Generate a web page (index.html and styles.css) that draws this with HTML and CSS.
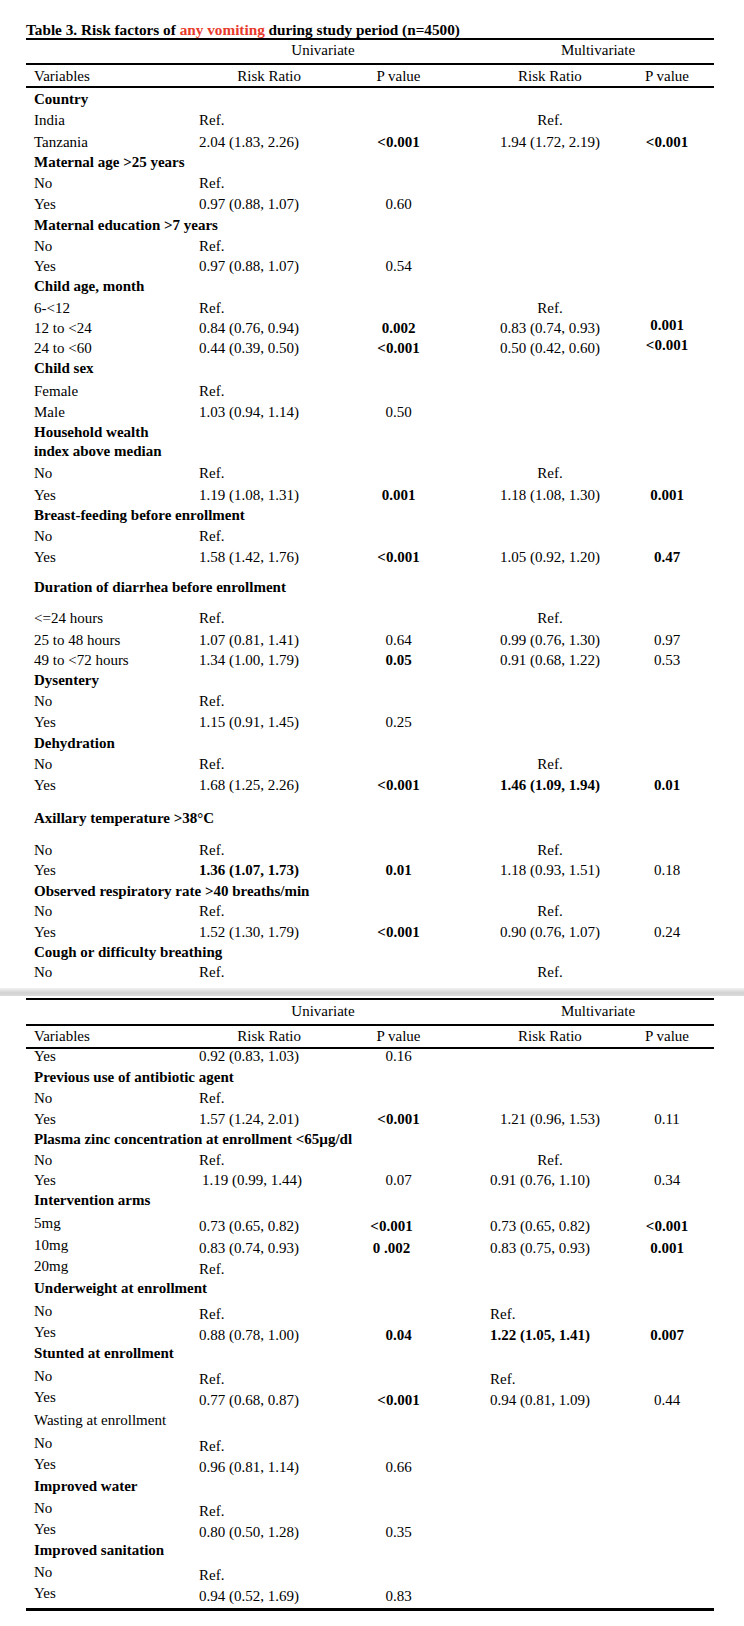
FILE: index.html
```html
<!DOCTYPE html>
<html lang="en">
<head>
<meta charset="utf-8">
<title>Table 3</title>
<link rel="stylesheet" href="styles.css">
</head>
<body>
<div class="page">
  <section class="part">
    <div class="title">Table 3. Risk factors of <span class="hl">any vomiting</span> during study period (n=4500)</div>
    <div class="table">
      <div class="row hd1"><div class="uh">Univariate</div><div class="mh">Multivariate</div></div>
      <div class="row hd2"><div class="lab">Variables</div><div class="rrh">Risk Ratio</div><div class="p">P value</div><div class="mrr">Risk Ratio</div><div class="mp">P value</div></div>

      <div class="row h22 first"><div class="sec">Country</div></div>
      <div class="row h22"><div class="lab">India</div><div class="rr">Ref.</div><div class="mrr">Ref.</div></div>
      <div class="row h20"><div class="lab">Tanzania</div><div class="rr">2.04 (1.83, 2.26)</div><div class="p b">&lt;0.001</div><div class="mrr">1.94 (1.72, 2.19)</div><div class="mp b">&lt;0.001</div></div>
      <div class="row h21"><div class="sec">Maternal age &gt;25 years</div></div>
      <div class="row h21"><div class="lab">No</div><div class="rr">Ref.</div></div>
      <div class="row h21"><div class="lab">Yes</div><div class="rr">0.97 (0.88, 1.07)</div><div class="p">0.60</div></div>
      <div class="row h21"><div class="sec">Maternal education &gt;7 years</div></div>
      <div class="row h20"><div class="lab">No</div><div class="rr">Ref.</div></div>
      <div class="row h20"><div class="lab">Yes</div><div class="rr">0.97 (0.88, 1.07)</div><div class="p">0.54</div></div>
      <div class="row h22"><div class="sec">Child age, month</div></div>
      <div class="row h20"><div class="lab">6-&lt;12</div><div class="rr">Ref.</div><div class="mrr">Ref.</div></div>
      <div class="row h20"><div class="lab">12 to &lt;24</div><div class="rr">0.84 (0.76, 0.94)</div><div class="p b">0.002</div><div class="mrr">0.83 (0.74, 0.93)</div><div class="mp b up">0.001</div></div>
      <div class="row h20"><div class="lab">24 to &lt;60</div><div class="rr">0.44 (0.39, 0.50)</div><div class="p b">&lt;0.001</div><div class="mrr">0.50 (0.42, 0.60)</div><div class="mp b up">&lt;0.001</div></div>
      <div class="row h23"><div class="sec">Child sex</div></div>
      <div class="row h21"><div class="lab">Female</div><div class="rr">Ref.</div></div>
      <div class="row h21"><div class="lab">Male</div><div class="rr">1.03 (0.94, 1.14)</div><div class="p">0.50</div></div>
      <div class="row h40"><div class="sec two">Household wealth<br>index above median</div></div>
      <div class="row h22"><div class="lab">No</div><div class="rr">Ref.</div><div class="mrr">Ref.</div></div>
      <div class="row h20"><div class="lab">Yes</div><div class="rr">1.19 (1.08, 1.31)</div><div class="p b">0.001</div><div class="mrr">1.18 (1.08, 1.30)</div><div class="mp b">0.001</div></div>
      <div class="row h21"><div class="sec">Breast-feeding before enrollment</div></div>
      <div class="row h21"><div class="lab">No</div><div class="rr">Ref.</div></div>
      <div class="row h30"><div class="lab">Yes</div><div class="rr">1.58 (1.42, 1.76)</div><div class="p b">&lt;0.001</div><div class="mrr">1.05 (0.92, 1.20)</div><div class="mp b">0.47</div></div>
      <div class="row h31"><div class="sec">Duration of diarrhea before enrollment</div></div>
      <div class="row h22"><div class="lab">&lt;=24 hours</div><div class="rr">Ref.</div><div class="mrr">Ref.</div></div>
      <div class="row h20"><div class="lab">25 to 48 hours</div><div class="rr">1.07 (0.81, 1.41)</div><div class="p">0.64</div><div class="mrr">0.99 (0.76, 1.30)</div><div class="mp">0.97</div></div>
      <div class="row h20"><div class="lab">49 to &lt;72 hours</div><div class="rr">1.34 (1.00, 1.79)</div><div class="p b">0.05</div><div class="mrr">0.91 (0.68, 1.22)</div><div class="mp">0.53</div></div>
      <div class="row h21"><div class="sec">Dysentery</div></div>
      <div class="row h21"><div class="lab">No</div><div class="rr">Ref.</div></div>
      <div class="row h21"><div class="lab">Yes</div><div class="rr">1.15 (0.91, 1.45)</div><div class="p">0.25</div></div>
      <div class="row h21"><div class="sec">Dehydration</div></div>
      <div class="row h21"><div class="lab">No</div><div class="rr">Ref.</div><div class="mrr">Ref.</div></div>
      <div class="row h33"><div class="lab">Yes</div><div class="rr">1.68 (1.25, 2.26)</div><div class="p b">&lt;0.001</div><div class="mrr b">1.46 (1.09, 1.94)</div><div class="mp b">0.01</div></div>
      <div class="row h32"><div class="sec">Axillary temperature &gt;38°C</div></div>
      <div class="row h20"><div class="lab">No</div><div class="rr">Ref.</div><div class="mrr">Ref.</div></div>
      <div class="row h21"><div class="lab">Yes</div><div class="rr b">1.36 (1.07, 1.73)</div><div class="p b">0.01</div><div class="mrr">1.18 (0.93, 1.51)</div><div class="mp">0.18</div></div>
      <div class="row h20"><div class="sec">Observed respiratory rate &gt;40 breaths/min</div></div>
      <div class="row h21"><div class="lab">No</div><div class="rr">Ref.</div><div class="mrr">Ref.</div></div>
      <div class="row h20"><div class="lab">Yes</div><div class="rr">1.52 (1.30, 1.79)</div><div class="p b">&lt;0.001</div><div class="mrr">0.90 (0.76, 1.07)</div><div class="mp">0.24</div></div>
      <div class="row h20"><div class="sec">Cough or difficulty breathing</div></div>
      <div class="row h26"><div class="lab">No</div><div class="rr">Ref.</div><div class="mrr">Ref.</div></div>
    </div>
  </section>

  <div class="sep"></div>

  <section class="part second">
    <div class="table">
      <div class="row hd1"><div class="uh">Univariate</div><div class="mh">Multivariate</div></div>
      <div class="row hd2"><div class="lab">Variables</div><div class="rrh">Risk Ratio</div><div class="p">P value</div><div class="mrr">Risk Ratio</div><div class="mp">P value</div></div>

      <div class="row h18 tight"><div class="lab">Yes</div><div class="rr">0.92 (0.83, 1.03)</div><div class="p">0.16</div></div>
      <div class="row h21"><div class="sec">Previous use of antibiotic agent</div></div>
      <div class="row h21"><div class="lab">No</div><div class="rr">Ref.</div></div>
      <div class="row h20"><div class="lab">Yes</div><div class="rr">1.57 (1.24, 2.01)</div><div class="p b">&lt;0.001</div><div class="mrr">1.21 (0.96, 1.53)</div><div class="mp">0.11</div></div>
      <div class="row h21"><div class="sec">Plasma zinc concentration at enrollment &lt;65µg/dl</div></div>
      <div class="row h20"><div class="lab">No</div><div class="rr">Ref.</div><div class="mrr">Ref.</div></div>
      <div class="row h20"><div class="lab">Yes</div><div class="rr ind">1.19 (0.99, 1.44)</div><div class="p">0.07</div><div class="mrr l">0.91 (0.76, 1.10)</div><div class="mp">0.34</div></div>
      <div class="row h23"><div class="sec">Intervention arms</div></div>
      <div class="row h22 dn"><div class="lab">5mg</div><div class="rr">0.73 (0.65, 0.82)</div><div class="p b pl">&lt;0.001</div><div class="mrr l">0.73 (0.65, 0.82)</div><div class="mp b">&lt;0.001</div></div>
      <div class="row h21 dn"><div class="lab">10mg</div><div class="rr">0.83 (0.74, 0.93)</div><div class="p b pl">0 .002</div><div class="mrr l">0.83 (0.75, 0.93)</div><div class="mp b">0.001</div></div>
      <div class="row h22 dn"><div class="lab">20mg</div><div class="rr">Ref.</div></div>
      <div class="row h23"><div class="sec">Underweight at enrollment</div></div>
      <div class="row h21 dn"><div class="lab">No</div><div class="rr">Ref.</div><div class="mrr l">Ref.</div></div>
      <div class="row h21 dn"><div class="lab">Yes</div><div class="rr">0.88 (0.78, 1.00)</div><div class="p b">0.04</div><div class="mrr l b">1.22 (1.05, 1.41)</div><div class="mp b">0.007</div></div>
      <div class="row h23"><div class="sec">Stunted at enrollment</div></div>
      <div class="row h21 dn"><div class="lab">No</div><div class="rr">Ref.</div><div class="mrr l">Ref.</div></div>
      <div class="row h23 dn"><div class="lab">Yes</div><div class="rr">0.77 (0.68, 0.87)</div><div class="p b">&lt;0.001</div><div class="mrr l">0.94 (0.81, 1.09)</div><div class="mp">0.44</div></div>
      <div class="row h23"><div class="sec plain">Wasting at enrollment</div></div>
      <div class="row h21 dn"><div class="lab">No</div><div class="rr">Ref.</div></div>
      <div class="row h22 dn"><div class="lab">Yes</div><div class="rr">0.96 (0.81, 1.14)</div><div class="p">0.66</div></div>
      <div class="row h22"><div class="sec">Improved water</div></div>
      <div class="row h21 dn"><div class="lab">No</div><div class="rr">Ref.</div></div>
      <div class="row h21 dn"><div class="lab">Yes</div><div class="rr">0.80 (0.50, 1.28)</div><div class="p">0.35</div></div>
      <div class="row h22"><div class="sec">Improved sanitation</div></div>
      <div class="row h21 dn"><div class="lab">No</div><div class="rr">Ref.</div></div>
      <div class="row h25 dn last"><div class="lab">Yes</div><div class="rr">0.94 (0.52, 1.69)</div><div class="p">0.83</div></div>
    </div>
  </section>
</div>
</body>
</html>
```

FILE: styles.css
```css
* {
  box-sizing: border-box;
}

html,
body {
  margin: 0;
  padding: 0;
  background: #ffffff;
}

body {
  width: 744px;
  font-family: "Liberation Serif", "Times New Roman", serif;
  font-size: 15px;
  color: #000000;
}

.page {
  padding-top: 20px;
}

.part {
  margin-left: 26px;
  width: 688px;
}

.title {
  height: 18px;
  line-height: 20px;
  font-size: 15.25px;
  font-weight: bold;
  white-space: nowrap;
}

.hl {
  color: #e83a2b;
}

.table {
  border-top: 2px solid #000000;
}

.second .table {
  border-bottom: 3px solid #000000;
}

.row {
  display: grid;
  grid-template-columns: 173px 156px 87px 198px 54px 20px;
  line-height: 20px;
  white-space: nowrap;
}

/* header rows */
.hd1 {
  height: 25px;
  border-bottom: 2px solid #000000;
}

.second .hd1 {
  height: 26px;
  padding-top: 1px;
}

.hd2 {
  height: 23px;
  padding-top: 1px;
  border-bottom: 2px solid #000000;
}

.second .hd2 {
  padding-top: 0;
}

.uh {
  grid-column: 2 / 4;
  text-align: center;
  padding-left: 5px;
}

.mh {
  grid-column: 4 / 7;
  text-align: center;
  padding-left: 40px;
}

.rrh {
  grid-column: 2;
  text-align: right;
  padding-right: 54px;
}

/* cells */
.lab {
  grid-column: 1;
  padding-left: 8px;
}

.sec {
  grid-column: 1 / -1;
  padding-left: 8px;
  font-weight: bold;
}

.sec.plain {
  font-weight: normal;
}

.sec.two {
  line-height: 19px;
}

.rr {
  grid-column: 2;
}

.rr.ind {
  padding-left: 3px;
}

.p {
  grid-column: 3;
  text-align: center;
}

.p.pl {
  padding-right: 14px;
}

.mrr {
  grid-column: 4;
  text-align: center;
  padding-left: 18px;
}

.mrr.l {
  text-align: left;
  padding-left: 48px;
}

.mp {
  grid-column: 5;
  text-align: center;
}

.b {
  font-weight: bold;
}

.up {
  margin-top: -3px;
}

.dn .rr,
.dn .p,
.dn .mrr,
.dn .mp {
  padding-top: 3px;
}

/* row heights */
.h18 { height: 18px; }
.h20 { height: 20px; }
.h21 { height: 21px; }
.h22 { height: 22px; }
.h23 { height: 23px; }
.h25 { height: 25px; }
.h26 { height: 26px; }
.h30 { height: 30px; }
.h31 { height: 31px; }
.h32 { height: 32px; }
.h33 { height: 33px; }
.h40 { height: 40px; }

.first {
  padding-top: 1px;
}

.tight {
  line-height: 14px;
}

/* page-break separator */
.sep {
  width: 744px;
  height: 8px;
  margin-bottom: 2px;
  background: linear-gradient(#f2f2f2, #d2d2d2 60%, #dcdcdc);
}
```
